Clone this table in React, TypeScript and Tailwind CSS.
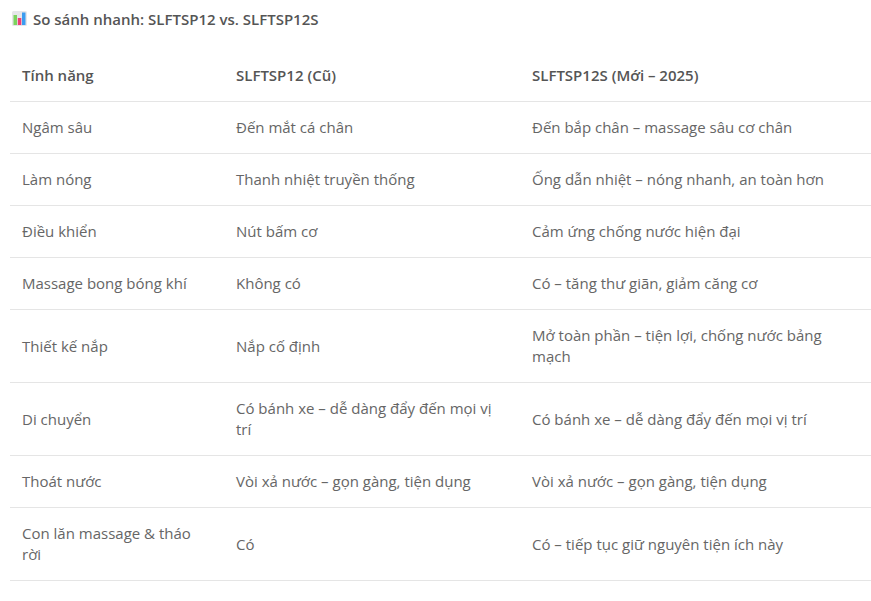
import React from "react";

const rows: [string, string, string][] = [
  ["Ngâm sâu", "Đến mắt cá chân", "Đến bắp chân – massage sâu cơ chân"],
  ["Làm nóng", "Thanh nhiệt truyền thống", "Ống dẫn nhiệt – nóng nhanh, an toàn hơn"],
  ["Điều khiển", "Nút bấm cơ", "Cảm ứng chống nước hiện đại"],
  ["Massage bong bóng khí", "Không có", "Có – tăng thư giãn, giảm căng cơ"],
  ["Thiết kế nắp", "Nắp cố định", "Mở toàn phần – tiện lợi, chống nước bảng mạch"],
  ["Di chuyển", "Có bánh xe – dễ dàng đẩy đến mọi vị trí", "Có bánh xe – dễ dàng đẩy đến mọi vị trí"],
  ["Thoát nước", "Vòi xả nước – gọn gàng, tiện dụng", "Vòi xả nước – gọn gàng, tiện dụng"],
  ["Con lăn massage & tháo rời", "Có", "Có – tiếp tục giữ nguyên tiện ích này"],
];

function ChartIcon() {
  return (
    <svg width="15" height="15" viewBox="0 0 15 15" className="shrink-0">
      <rect x="0" y="0" width="15" height="15" rx="1.5" fill="#e6e6ea" />
      <rect x="1.5" y="4" width="3.5" height="10" fill="#7bd35e" />
      <rect x="5.8" y="7" width="3.5" height="7" fill="#ef3d75" />
      <rect x="10" y="1.5" width="3.5" height="12.5" fill="#3b9cf0" />
    </svg>
  );
}

export default function App() {
  return (
    <div className="w-[871px] h-[601px] bg-white font-['Open_Sans',sans-serif] text-[15px] text-[#666]">
      <div className="flex items-center gap-[6px] pl-[12px] pt-[9px] h-[28px]">
        <ChartIcon />
        <h3 className="font-semibold text-[15px] text-[#555] leading-[20px]">
          So sánh nhanh: SLFTSP12 vs. SLFTSP12S
        </h3>
      </div>
      <table className="ml-[10px] mt-[22px] w-[861px] border-collapse table-fixed">
        <colgroup>
          <col className="w-[214px]" />
          <col className="w-[296px]" />
          <col />
        </colgroup>
        <thead>
          <tr className="border-b border-[#e5e5e5]">
            <th className="text-left font-semibold text-[#555] px-[12px] py-[15px] leading-[21px]">Tính năng</th>
            <th className="text-left font-semibold text-[#555] px-[12px] py-[15px] leading-[21px]">SLFTSP12 (Cũ)</th>
            <th className="text-left font-semibold text-[#555] px-[12px] py-[15px] leading-[21px]">SLFTSP12S (Mới – 2025)</th>
          </tr>
        </thead>
        <tbody>
          {rows.map((r) => (
            <tr key={r[0]} className="border-b border-[#e5e5e5]">
              <td className="align-middle px-[12px] py-[15px] leading-[21px]">{r[0]}</td>
              <td className="align-middle px-[12px] py-[15px] leading-[21px]">{r[1]}</td>
              <td className="align-middle px-[12px] py-[15px] leading-[21px]">{r[2]}</td>
            </tr>
          ))}
        </tbody>
      </table>
    </div>
  );
}
